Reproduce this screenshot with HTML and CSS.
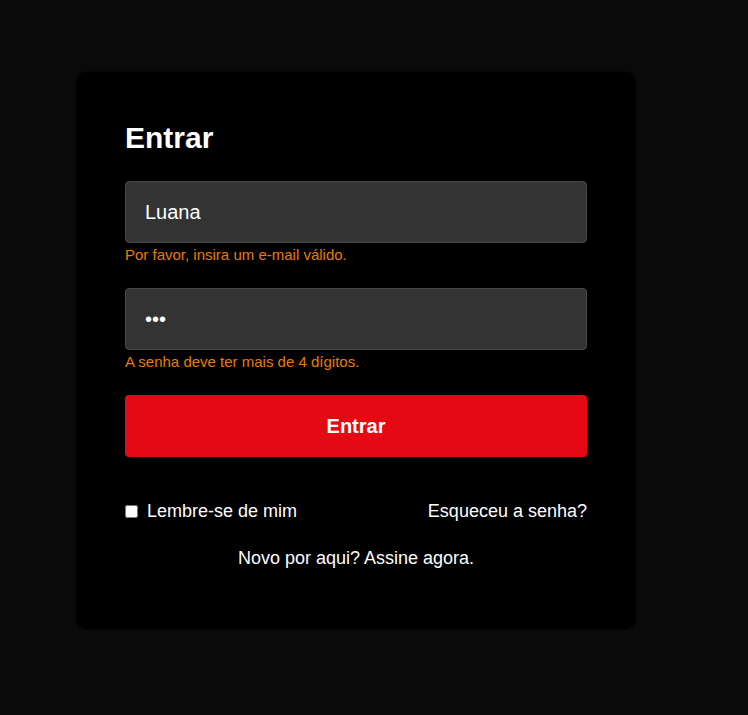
FILE: index.html
```html
<!DOCTYPE html>
<html lang="pt-BR">
<head>
<meta charset="utf-8">
<title>Entrar</title>
<link rel="stylesheet" href="styles.css">
</head>
<body>
<main class="page">
  <form class="card">
    <h1 class="title">Entrar</h1>
    <div class="field">
      <input class="input" type="text" value="Luana">
      <p class="error">Por favor, insira um e-mail válido.</p>
    </div>
    <div class="field">
      <input class="input" type="password" value="123">
      <p class="error">A senha deve ter mais de 4 dígitos.</p>
    </div>
    <button class="submit" type="button">Entrar</button>
    <div class="row">
      <label class="remember"><input class="check" type="checkbox"><span>Lembre-se de mim</span></label>
      <span class="link">Esqueceu a senha?</span>
    </div>
    <p class="signup">Novo por aqui? Assine agora.</p>
  </form>
</main>
</body>
</html>
```
FILE: styles.css
```css
html, body {
  margin: 0;
  padding: 0;
  background: #0b0b0b;
  font-family: "Liberation Sans", Arial, sans-serif;
  color: #fff;
}
.page {
  padding: 72px 0 0 76px;
  height: 643px;
}
.card {
  box-sizing: border-box;
  width: 560px;
  height: 557px;
  background: #000;
  border-radius: 10px;
  box-shadow: 0 0 6px rgba(0,0,0,0.6);
  padding: 49px 49px 0 49px;
  display: flex;
  flex-direction: column;
}
.title {
  margin: 0 0 26px 0;
  font-size: 30px;
  font-weight: bold;
  line-height: 34px;
}
.field {
  display: flex;
  flex-direction: column;
  margin-bottom: 25px;
}
.input {
  box-sizing: border-box;
  height: 62px;
  width: 100%;
  background: #333;
  border: 1px solid #474747;
  border-radius: 4px;
  padding: 0 19px;
  color: #fff;
  font-family: "Liberation Sans", Arial, sans-serif;
  font-size: 20px;
  outline: none;
}
.error {
  margin: 3px 0 0 0;
  color: #e87c03;
  font-size: 15px;
  line-height: 17px;
}
.submit {
  height: 62px;
  border: none;
  border-radius: 4px;
  background: #e50914;
  color: #fff;
  font-family: "Liberation Sans", Arial, sans-serif;
  font-size: 20px;
  font-weight: bold;
  padding: 0;
}
.row {
  margin-top: 44px;
  display: flex;
  justify-content: space-between;
  align-items: center;
  font-size: 18px;
  line-height: 21px;
}
.remember {
  display: flex;
  align-items: center;
  gap: 9px;
}
.check {
  margin: 0;
  width: 13px;
  height: 13px;
}
.signup {
  margin: 26px 0 0 0;
  text-align: center;
  font-size: 18px;
  line-height: 21px;
}
```
